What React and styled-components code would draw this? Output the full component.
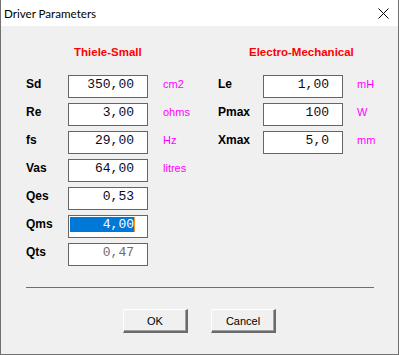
import React from "react";
import styled, { createGlobalStyle } from "styled-components";

const Global = createGlobalStyle`
  html, body { margin: 0; padding: 0; background: #f0f0f0; }
  #root { width: 399px; height: 355px; }
`;

const Window = styled.div`
  box-sizing: border-box;
  width: 399px;
  height: 355px;
  display: flex;
  flex-direction: column;
  background: #f0f0f0;
  border: 1px solid #707070;
  border-top: none;
`;

const TitleBar = styled.div`
  height: 26px;
  flex: none;
  display: flex;
  align-items: center;
  justify-content: space-between;
  background: #ffffff;
  padding: 0 9px 0 3px;
`;

const Title = styled.span`
  font-family: "Segoe UI", Lato, "Liberation Sans", sans-serif;
  font-size: 11.6px;
  color: #000;
  line-height: 16px;
  padding-top: 1px;
`;

const CloseIcon = () => (
  <svg width="11" height="11" viewBox="0 0 11 11" style={{ display: "block" }}>
    <path d="M0.5 0.5 L10.5 10.5 M10.5 0.5 L0.5 10.5" stroke="#000" strokeWidth="1" />
  </svg>
);

const Client = styled.div`
  flex: 1;
  display: flex;
  flex-direction: column;
  padding-top: 19px;
`;

const Columns = styled.div`
  display: flex;
  padding-left: 25px;
`;

const Column = styled.div`
  width: ${(p) => p.$width || "auto"};
  display: flex;
  flex-direction: column;
`;

const Header = styled.div`
  font-family: "Liberation Sans", Arial, sans-serif;
  font-weight: bold;
  font-size: 11.5px;
  line-height: 14px;
  color: #ff0000;
  padding-left: ${(p) => p.$indent}px;
  margin-bottom: 16px;
`;

const Rows = styled.div`
  display: flex;
  flex-direction: column;
  gap: 5px;
`;

const Row = styled.div`
  display: flex;
  align-items: flex-start;
  height: 23px;
`;

const Label = styled.div`
  width: ${(p) => p.$w}px;
  flex: none;
  font-family: "Liberation Sans", Arial, sans-serif;
  font-weight: bold;
  font-size: 12px;
  line-height: 14px;
  padding-top: 2px;
  color: #000;
`;

const Box = styled.div`
  box-sizing: border-box;
  width: 80px;
  height: 23px;
  flex: none;
  background: #ffffff;
  border: 1px solid #656565;
  padding: 1px 13px 0 1px;
`;

const Field = styled.div`
  height: 15px;
  line-height: 15px;
  text-align: right;
  font-family: "Liberation Mono", "Courier New", monospace;
  font-size: 13px;
  color: ${(p) => (p.$disabled ? "#6d6d6d" : p.$selected ? "#ffffff" : "#0a0a1e")};
  background: ${(p) => (p.$selected ? "#0078d7" : "transparent")};
  box-shadow: ${(p) => (p.$selected ? "1px 0 0 #f7931e" : "none")};
`;

const Unit = styled.div`
  font-family: "Liberation Sans", Arial, sans-serif;
  font-size: 11px;
  line-height: 14px;
  padding-top: 2px;
  margin-left: ${(p) => p.$gap}px;
  color: #ff00ff;
`;

const Separator = styled.div`
  height: 1px;
  background: #6e6e6e;
  margin: 21px 24px 0 25px;
`;

const Buttons = styled.div`
  display: flex;
  justify-content: center;
  gap: 23px;
  margin-top: 21px;
`;

const Button = styled.button`
  box-sizing: border-box;
  width: 65px;
  height: 24px;
  padding: 0;
  margin: 0;
  background: #f0f0f0;
  border-style: solid;
  border-width: 1px 2px 2px 1px;
  border-color: #ffffff #6a6a6a #6a6a6a #ffffff;
  box-shadow: inset -1px -1px 0 #a0a0a0;
  font-family: "Liberation Sans", Arial, sans-serif;
  font-size: 11px;
  color: #000;
  cursor: default;
`;

const left = [
  { label: "Sd", value: "350,00", unit: "cm2" },
  { label: "Re", value: "3,00", unit: "ohms" },
  { label: "fs", value: "29,00", unit: "Hz" },
  { label: "Vas", value: "64,00", unit: "litres" },
  { label: "Qes", value: "0,53" },
  { label: "Qms", value: "4,00", selected: true },
  { label: "Qts", value: "0,47", disabled: true },
];

const right = [
  { label: "Le", value: "1,00", unit: "mH" },
  { label: "Pmax", value: "100", unit: "W" },
  { label: "Xmax", value: "5,0", unit: "mm" },
];

const ParamRow = ({ item, labelWidth, unitGap }) => (
  <Row>
    <Label $w={labelWidth}>{item.label}</Label>
    <Box>
      <Field $selected={item.selected} $disabled={item.disabled}>
        {item.value}
      </Field>
    </Box>
    {item.unit && <Unit $gap={unitGap}>{item.unit}</Unit>}
  </Row>
);

export default function App() {
  return (
    <>
      <Global />
      <Window>
        <TitleBar>
          <Title>Driver Parameters</Title>
          <CloseIcon />
        </TitleBar>
        <Client>
          <Columns>
            <Column $width="192px">
              <Header $indent={48}>Thiele-Small</Header>
              <Rows>
                {left.map((it) => (
                  <ParamRow key={it.label} item={it} labelWidth={42} unitGap={15} />
                ))}
              </Rows>
            </Column>
            <Column>
              <Header $indent={31}>Electro-Mechanical</Header>
              <Rows>
                {right.map((it) => (
                  <ParamRow key={it.label} item={it} labelWidth={45} unitGap={14} />
                ))}
              </Rows>
            </Column>
          </Columns>
          <Separator />
          <Buttons>
            <Button>OK</Button>
            <Button>Cancel</Button>
          </Buttons>
        </Client>
      </Window>
    </>
  );
}
